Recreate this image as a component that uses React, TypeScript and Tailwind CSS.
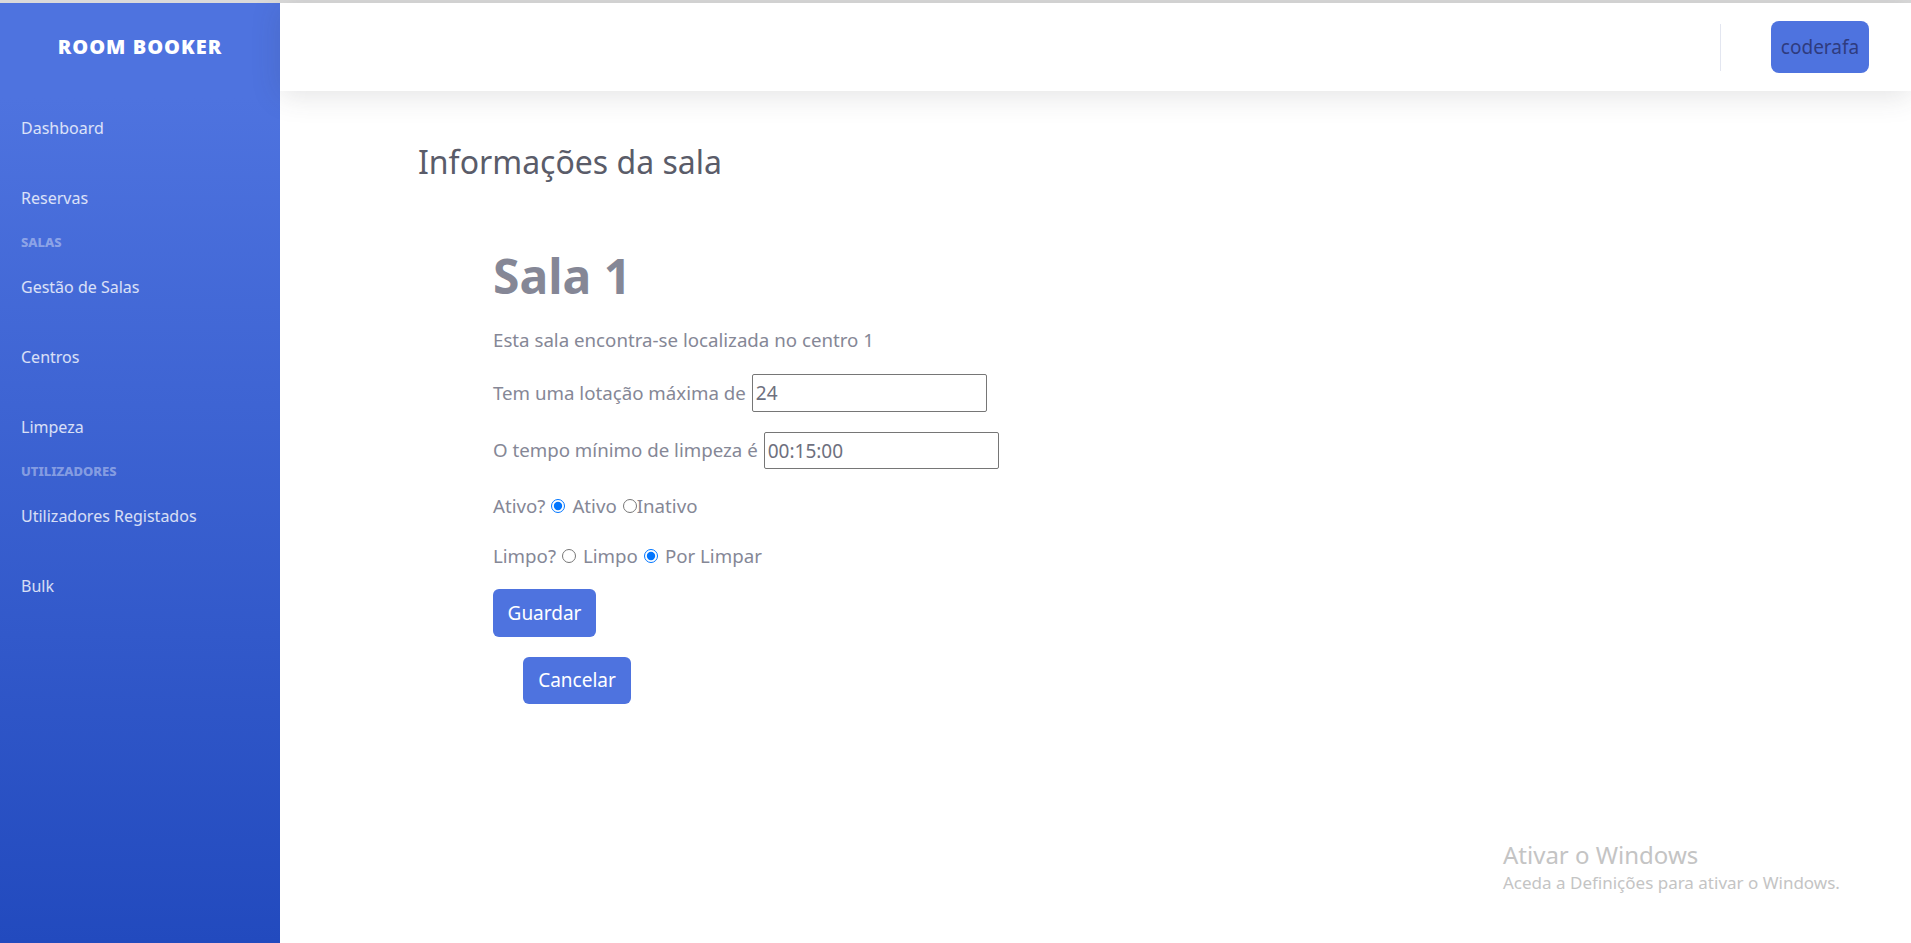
import React from "react";

const navTop = ["Dashboard", "Reservas"];

function NavItem({ label }: { label: string }) {
  return (
    <a className="flex h-[70px] items-center pl-[21px] text-[16px] text-white/80">
      {label}
    </a>
  );
}

function NavHeading({ label }: { label: string }) {
  return (
    <div className="flex h-[19px] items-center pl-[21px] text-[13px] font-extrabold uppercase text-white/40">
      {label}
    </div>
  );
}

export default function App() {
  return (
    <div className="flex min-h-screen w-full flex-col bg-white font-['Noto_Sans',sans-serif]">
      <div className="h-[3px] w-full bg-[#dadada]" />
      <div className="flex flex-1">
        {/* Sidebar */}
        <aside className="flex h-[940px] w-[280px] shrink-0 flex-col bg-[linear-gradient(180deg,#4e73df_10%,#224abe_100%)]">
          <div className="flex h-[88px] items-center justify-center">
            <span className="text-[20px] font-black uppercase tracking-[1px] text-white">
              Room Booker
            </span>
          </div>
          <nav className="mt-[2px] flex flex-col">
            {navTop.map((n) => (
              <NavItem key={n} label={n} />
            ))}
            <NavHeading label="Salas" />
            <NavItem label="Gestão de Salas" />
            <NavItem label="Centros" />
            <NavItem label="Limpeza" />
            <NavHeading label="Utilizadores" />
            <NavItem label="Utilizadores Registados" />
            <NavItem label="Bulk" />
          </nav>
        </aside>

        {/* Main */}
        <main className="relative flex flex-1 flex-col">
          <header className="relative z-10 flex h-[88px] items-center justify-end bg-white pr-[42px] shadow-[0_4px_28px_0_rgba(58,59,69,0.15)]">
            <div className="mr-[50px] h-[47px] w-px bg-[#e3e6f0]" />
            <button className="h-[52px] w-[98px] rounded-[8px] bg-[#4e73df] text-[19px] text-[#2f3b7e]">
              coderafa
            </button>
          </header>

          <section className="flex flex-col pl-[138px] pt-[49px]">
            <h1 className="h-[43px] text-[32px] leading-[43px] text-[#5a5c69]">
              Informações da sala
            </h1>

            <div className="mt-[62px] flex flex-col pl-[75px] text-[18.7px] text-[#858796]">
              <h2 className="h-[62px] text-[48px] font-bold leading-[62px] text-[#858796]">
                Sala 1
              </h2>
              <p className="mt-[18px] flex h-[30px] items-center">
                Esta sala encontra-se localizada no centro 1
              </p>
              <div className="mt-[19px] flex h-[38px] items-center">
                <span>Tem uma lotação máxima de</span>
                <input
                  defaultValue="24"
                  className="ml-[6px] h-[38px] w-[235px] rounded-[2px] border border-[#767676] px-[3px] text-[19px] text-[#6e707e]"
                />
              </div>
              <div className="mt-[20px] flex h-[37px] items-center">
                <span>O tempo mínimo de limpeza é</span>
                <input
                  defaultValue="00:15:00"
                  className="ml-[6px] h-[37px] w-[235px] rounded-[2px] border border-[#767676] px-[3px] text-[19px] text-[#6e707e]"
                />
              </div>
              <div className="mt-[22px] flex h-[30px] items-center">
                <span>Ativo?</span>
                <input
                  type="radio"
                  name="ativo"
                  defaultChecked
                  className="ml-[6px] mr-[7px] h-[14px] w-[14px] accent-[#0075ff]"
                />
                <span>Ativo</span>
                <input
                  type="radio"
                  name="ativo"
                  className="ml-[6px] mr-0 h-[14px] w-[14px] accent-[#0075ff]"
                />
                <span>Inativo</span>
              </div>
              <div className="mt-[20px] flex h-[30px] items-center">
                <span>Limpo?</span>
                <input
                  type="radio"
                  name="limpo"
                  className="ml-[6px] mr-[7px] h-[14px] w-[14px] accent-[#0075ff]"
                />
                <span>Limpo</span>
                <input
                  type="radio"
                  name="limpo"
                  defaultChecked
                  className="ml-[6px] mr-[7px] h-[14px] w-[14px] accent-[#0075ff]"
                />
                <span>Por Limpar</span>
              </div>
              <div className="mt-[18px]">
                <button className="h-[48px] w-[103px] rounded-[6px] bg-[#4e73df] text-[19px] text-white">
                  Guardar
                </button>
              </div>
              <div className="ml-[30px] mt-[20px]">
                <button className="h-[47px] w-[108px] rounded-[6px] bg-[#4e73df] text-[19px] text-white">
                  Cancelar
                </button>
              </div>
            </div>
          </section>

          <div className="pointer-events-none absolute left-[1223px] top-[835px] flex flex-col text-[#c4c4c4]">
            <span className="text-[24px] leading-[34px]">Ativar o Windows</span>
            <span className="text-[17px] leading-[22px]">
              Aceda a Definições para ativar o Windows.
            </span>
          </div>
        </main>
      </div>
    </div>
  );
}
